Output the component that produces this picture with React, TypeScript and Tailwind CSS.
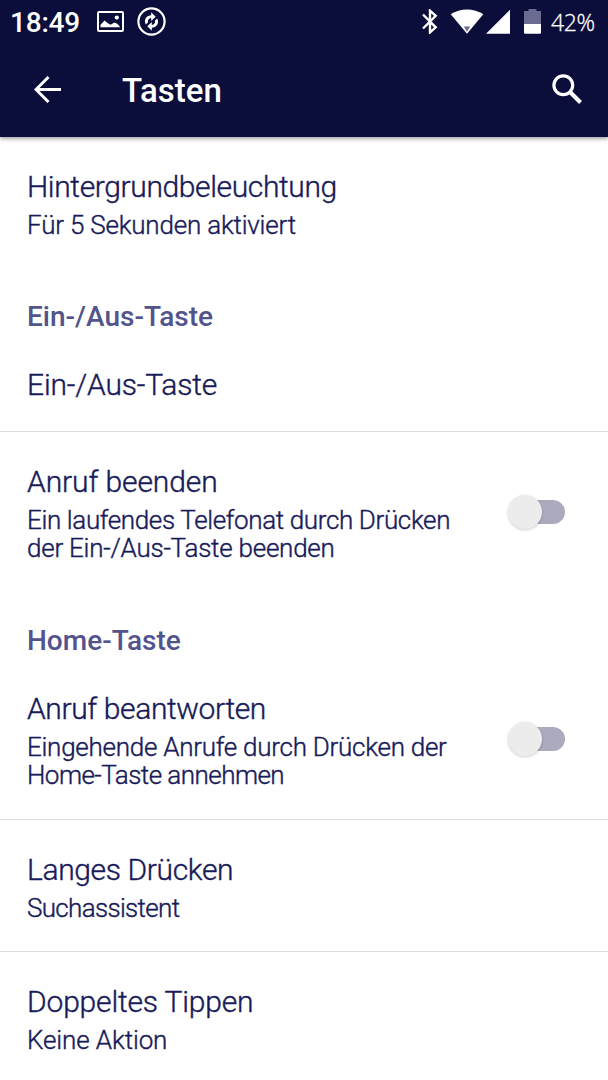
import { clsx } from "clsx";

type Line = {
  text: string;
  spacing: string;
};

type RowProps = {
  title: Line;
  summary?: Line[];
  height: string;
  divider?: boolean;
  toggle?: boolean;
};

function StatusBar() {
  return (
    <div className="flex h-[42px] items-center text-white">
      <span className="ml-[10px] w-[72px] pt-[3px] text-[28px] leading-8 font-medium tracking-[-0.2px]">18:49</span>

      {/* Screenshot */}
      <svg className="ml-[15px] h-[21px] w-[27px]" viewBox="0 0 27 21" fill="none">
        <rect x="1" y="1" width="25" height="19" rx="1" stroke="currentColor" strokeWidth="2" />
        <path d="M3.5 16.3v-2.5l4.100-4.300 3.600 3 2.400 1.300 3.800-2.200 3.300 1.400 2.500 3.300z" fill="currentColor" />
        <circle cx="19.8" cy="6.6" r="2.1" fill="currentColor" />
      </svg>

      {/* Sync */}
      <svg className="ml-[13px] h-[29px] w-[29px]" viewBox="0 0 29 29" fill="none">
        <circle cx="14.5" cy="14.5" r="13.1" stroke="currentColor" strokeWidth="2.2" />
        <path d="M14.2 5.2v3C10 8.5 7.6 11.4 8 15.2l.8 2.3 2.2-2.1c-.5-2.3.8-4.3 3.2-4.5v3.2l4.5-4.4z" fill="currentColor" />
        <path d="M14.8 23.8v-3c4.2-.3 6.6-3.2 6.2-7l-.8-2.3-2.2 2.1c.5 2.3-.8 4.3-3.2 4.5v-3.2l-4.5 4.4z" fill="currentColor" />
      </svg>

      <div className="ml-auto flex items-center">
        {/* Bluetooth */}
        <svg className="h-[25px] w-[16px]" viewBox="0 0 16 25" fill="none">
          <path d="m1 5.5 12.7 12.8L8 23.4V1.7l5.7 5.1L1 19.5" stroke="currentColor" strokeWidth="2.4" />
        </svg>
        {/* Wifi */}
        <svg className="ml-[12px] h-[25px] w-[34px]" viewBox="0 0 34 25">
          <path d="M.7 5.3C10-1.2 24-1.2 33.3 5.3L17 24.8z" fill="currentColor" />
          <path d="M13.8 17.5h6.4L17 22.8z" fill="#6b6b91" />
        </svg>
        {/* Signal */}
        <svg className="ml-[2px] h-[25px] w-[24px]" viewBox="0 0 24 25">
          <path d="M24 .7v24H0z" fill="currentColor" />
        </svg>
        {/* Battery */}
        <svg className="ml-[14px] h-[25px] w-[17px]" viewBox="0 0 17 25">
          <path d="M4.5 0h8v2H17v13H0V2h4.5z" fill="#6b6b91" />
          <path d="M0 15h17v8.5q0 1.2-1.2 1.2H1.2Q0 24.7 0 23.5z" fill="currentColor" />
        </svg>
        <span className="mr-[13px] ml-[10px] w-[44px] pt-[2px] font-['Open_Sans','Noto_Sans',sans-serif] text-[23px] leading-8 font-light tracking-[-0.4px] [-webkit-text-stroke:0.3px]">
          42%
        </span>
      </div>
    </div>
  );
}

function AppBar() {
  return (
    <div className="flex h-[94px] items-center text-white">
      <svg className="ml-[34px] h-[28px] w-[28px]" viewBox="0 0 28 28" fill="none">
        <path d="M27 14.500H2.500M14.500 2 2 14.500 14.500 27" stroke="currentColor" strokeWidth="3" />
      </svg>
      <h1 className="ml-[60px] pt-[3px] text-[33px] leading-10 font-medium">Tasten</h1>
      <svg className="mr-[26px] ml-auto h-[30px] w-[30px]" viewBox="0 0 30 30" fill="none">
        <circle cx="11.3" cy="11.3" r="9.4" stroke="currentColor" strokeWidth="3.2" />
        <path d="m18.500 18.500 10 10" stroke="currentColor" strokeWidth="4" />
      </svg>
    </div>
  );
}

function Toggle() {
  return (
    <button
      type="button"
      role="switch"
      aria-checked="false"
      className="mr-[43px] flex h-6 w-[53px] items-center rounded-full bg-[#acabbd]"
    >
      <span className="-ml-1 h-[34px] w-[34px] shrink-0 rounded-full bg-[#ececec] shadow-[0_1px_3px_rgba(0,0,0,0.2)]" />
    </button>
  );
}

function SectionTitle({ children }: { children: string }) {
  return (
    <h2 className="h-[67px] pt-[33px] pl-[27px] text-[28px] leading-8 font-medium text-[#52548c]">
      {children}
    </h2>
  );
}

function Row({ title, summary, height, divider, toggle }: RowProps) {
  return (
    <div className={clsx("flex justify-between", height, divider && "border-b border-[#dedee0]")}>
      <div className="pt-8 pl-[27px] whitespace-nowrap">
        <div className={clsx("text-[30px] leading-9", title.spacing)}>{title.text}</div>
        {summary && (
          <div className="mt-1.5 text-[26px] leading-7">
            {summary.map((line) => (
              <div key={line.text} className={line.spacing}>
                {line.text}
              </div>
            ))}
          </div>
        )}
      </div>
      {toggle && (
        <div className="flex items-center">
          <Toggle />
        </div>
      )}
    </div>
  );
}

export default function App() {
  return (
    <div className="h-[1080px] w-[608px] overflow-hidden bg-white font-[Roboto,sans-serif] text-[#191b59]">
      <header className="relative h-[137px] bg-[#0b0d3b] shadow-[0_2px_4px_rgba(0,0,0,0.35)]">
        <StatusBar />
        <AppBar />
      </header>

      <main>
        <div className="font-light [-webkit-text-stroke:0.4px]">
          <Row
            height="h-[131px]"
            title={{ text: "Hintergrundbeleuchtung", spacing: "tracking-[-0.37px]" }}
            summary={[{ text: "Für 5 Sekunden aktiviert", spacing: "tracking-[-0.2px]" }]}
          />
        </div>

        <SectionTitle>Ein-/Aus-Taste</SectionTitle>
        <div className="font-light [-webkit-text-stroke:0.4px]">
          <Row height="h-[97px]" divider title={{ text: "Ein-/Aus-Taste", spacing: "tracking-[-0.17px]" }} />
          <Row
            height="h-[160px]"
            toggle
            title={{ text: "Anruf beenden", spacing: "tracking-[-0.1px]" }}
            summary={[
              { text: "Ein laufendes Telefonat durch Drücken", spacing: "tracking-[-0.36px]" },
              { text: "der Ein-/Aus-Taste beenden", spacing: "tracking-[-0.24px]" },
            ]}
          />
        </div>

        <SectionTitle>Home-Taste</SectionTitle>
        <div className="font-light [-webkit-text-stroke:0.4px]">
          <Row
            height="h-[161px]"
            divider
            toggle
            title={{ text: "Anruf beantworten", spacing: "tracking-[-0.38px]" }}
            summary={[
              { text: "Eingehende Anrufe durch Drücken der", spacing: "tracking-[-0.26px]" },
              { text: "Home-Taste annehmen", spacing: "tracking-[-0.54px]" },
            ]}
          />
          <Row
            height="h-[132px]"
            divider
            title={{ text: "Langes Drücken", spacing: "tracking-[-0.36px]" }}
            summary={[{ text: "Suchassistent", spacing: "tracking-[-0.68px]" }]}
          />
          <Row
            height="h-[132px]"
            title={{ text: "Doppeltes Tippen", spacing: "tracking-[-0.17px]" }}
            summary={[{ text: "Keine Aktion", spacing: "tracking-[-0.1px]" }]}
          />
        </div>
      </main>
    </div>
  );
}
